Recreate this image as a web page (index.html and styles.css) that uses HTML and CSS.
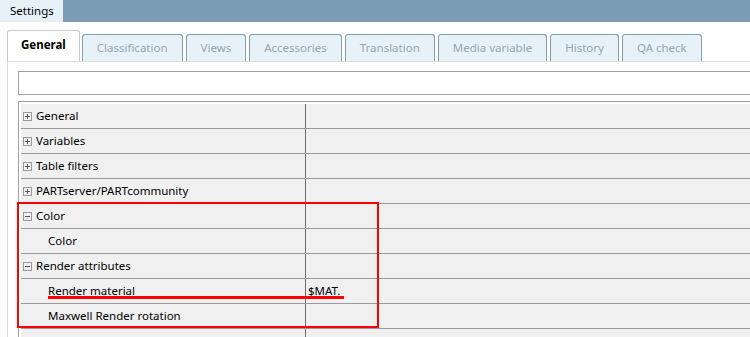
FILE: index.html
```html
<!DOCTYPE html>
<html lang="en">
<head>
    <meta charset="UTF-8">
    <title>Settings</title>
    <link rel="stylesheet" href="styles.css">
</head>
<body>
    <div class="window">
        <div class="titlebar">
            <div class="title-tab">Settings</div>
        </div>

        <div class="tabs">
            <div class="tab active">General</div>
            <div class="tab">Classification</div>
            <div class="tab">Views</div>
            <div class="tab">Accessories</div>
            <div class="tab">Translation</div>
            <div class="tab">Media variable</div>
            <div class="tab">History</div>
            <div class="tab">QA check</div>
        </div>

        <div class="panel">
            <div class="search"></div>
            <div class="grid">
                <div class="row"><div class="name"><span class="toggle plus"></span>General</div><div class="value"></div></div>
                <div class="row"><div class="name"><span class="toggle plus"></span>Variables</div><div class="value"></div></div>
                <div class="row"><div class="name"><span class="toggle plus"></span>Table filters</div><div class="value"></div></div>
                <div class="row"><div class="name"><span class="toggle plus"></span>PARTserver/PARTcommunity</div><div class="value"></div></div>
                <div class="row"><div class="name"><span class="toggle"></span>Color</div><div class="value"></div></div>
                <div class="row"><div class="name child">Color</div><div class="value"></div></div>
                <div class="row"><div class="name"><span class="toggle"></span>Render attributes</div><div class="value"></div></div>
                <div class="row"><div class="name child">Render material</div><div class="value">$MAT.</div></div>
                <div class="row"><div class="name child">Maxwell Render rotation</div><div class="value"></div></div>
                <div class="row"><div class="name"><span class="toggle plus"></span>Alternative 3D view</div><div class="value"></div></div>
            </div>
        </div>

        <!-- annotation marks drawn over the grid -->
        <div class="mark-box"></div>
        <div class="mark-line"></div>
    </div>
</body>
</html>
```

FILE: styles.css
```css
body {
    margin: 0;
    height: 337px;
    overflow: hidden;
    background: #ffffff;
    font-family: "Noto Sans", "Open Sans", sans-serif;
    font-size: 11.5px;
    color: #000000;
}
.window {
    position: relative;
    height: 337px;
    overflow: hidden;
}
.titlebar {
    height: 22px;
    background-color: #7a9db3;
    display: flex;
}
.title-tab {
    width: 53px;
    padding-left: 10px;
    background-color: #e6f0f7;
    line-height: 22px;
}
.tabs {
    display: flex;
    align-items: flex-end;
    gap: 3px;
    height: 30px;
    margin-top: 9px;
    padding-left: 7px;
}
.tab {
    height: 26px;
    line-height: 26px;
    padding: 0 14px;
    background-color: #e6f1f8;
    border: 1px solid #7f9db2;
    border-bottom: none;
    border-radius: 3px 3px 0 0;
    color: #93a7b6;
    white-space: nowrap;
}
.tab.active {
    height: 30px;
    line-height: 28px;
    padding: 0 13px;
    margin-right: -1px;
    background-color: #ffffff;
    border-color: #c9c9c9;
    color: #000000;
    font-weight: bold;
}
.panel {
    margin-left: 7px;
    border-left: 1px solid #dcdcdc;
    border-top: 1px solid #dcdcdc;
    padding: 9px 0 0 10px;
    height: 300px;
}
.search {
    width: 800px;
    height: 22px;
    border: 1px solid #a0a0a0;
    background: #ffffff;
}
.grid {
    width: 800px;
    margin-top: 6px;
    border: 1px solid #a0a0a0;
    padding: 2px 0 0 2px;
    background: #ffffff;
}
.row {
    display: flex;
    height: 24px;
    border-bottom: 1px solid #9a9a9a;
    background: #f0f0f0;
}
.name {
    width: 285px;
    display: flex;
    align-items: center;
    padding: 0 0 2px 2px;
    box-sizing: border-box;
    border-right: 1px solid #6e6e6e;
    white-space: nowrap;
}
.name.child {
    padding-left: 27px;
}
.value {
    flex: 1;
    display: flex;
    align-items: center;
    padding: 0 0 2px 2px;
}
.toggle {
    position: relative;
    width: 7px;
    height: 7px;
    border: 1px solid #9a9a9a;
    margin: 2px 4px 0 0;
    flex: none;
}
.toggle::before {
    content: "";
    position: absolute;
    left: 1px;
    top: 3px;
    width: 5px;
    height: 1px;
    background: #5a5a5a;
}
.toggle.plus::after {
    content: "";
    position: absolute;
    left: 3px;
    top: 1px;
    width: 1px;
    height: 5px;
    background: #5a5a5a;
}
.mark-box {
    position: absolute;
    left: 17px;
    top: 202px;
    width: 358px;
    height: 122px;
    border: 2px solid #ff0000;
}
.mark-line {
    position: absolute;
    left: 48px;
    top: 296px;
    width: 296px;
    height: 3px;
    background: #ff0000;
}
```
